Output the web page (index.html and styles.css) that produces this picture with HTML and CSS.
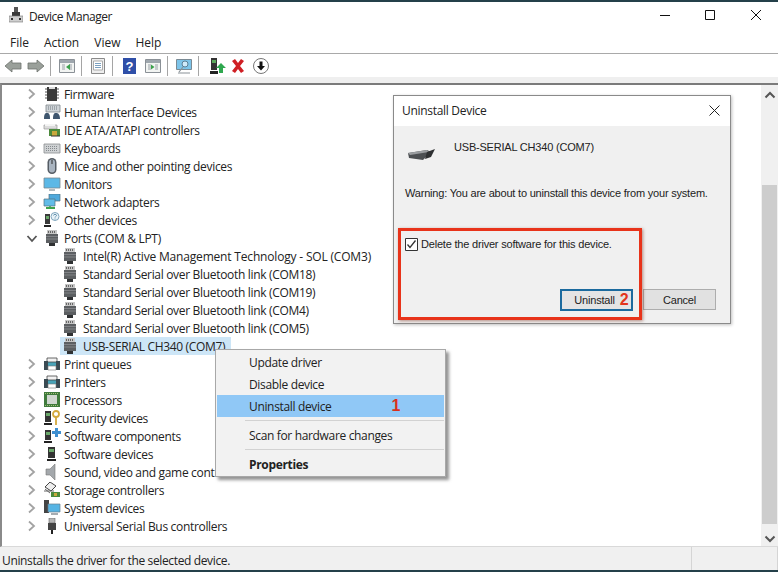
FILE: index.html
```html
<!DOCTYPE html>
<html lang="en">
<head>
<meta charset="utf-8">
<title>Device Manager</title>
<link rel="stylesheet" href="styles.css">
</head>
<body>
<svg class="defs" aria-hidden="true">
  <symbol id="chev-r" viewBox="0 0 9 12"><path d="M2 1.5 7 6 2 10.500" fill="none" stroke="#a3a3a3" stroke-width="1.8"/></symbol>
  <symbol id="chev-d" viewBox="0 0 12 9"><path d="M1.500 2 6 7 10.500 2" fill="none" stroke="#555" stroke-width="1.800"/></symbol>
  <symbol id="i-chip" viewBox="0 0 16 16"><path d="M3 1h10v14H3z" fill="#3a3a3a"/><path d="M1 3h2M1 6h2M1 9h2M1 12h2M13 3h2M13 6h2M13 9h2M13 12h2" stroke="#555"/><path d="M5 1h6v2H5z" fill="#ddd"/></symbol>
  <symbol id="i-hid" viewBox="0 0 18 16"><path d="M3 1h14v7H3z" fill="#cfd4d8" stroke="#7d858c" stroke-width=".8"/><path d="M5 3h10M5 5h10" stroke="#70787e" stroke-dasharray="1 1"/><path d="M1 15c0-5 1-6 3-6s3 1 3 6zM10 15c0-5 1-6 3-6s4 1 4 6z" fill="#3f566e"/></symbol>
  <symbol id="i-ide" viewBox="0 0 18 16"><path d="M1 3h13v4H1z" fill="#dcdcdc" stroke="#9a9a9a" stroke-width=".7"/><path d="M2 2h10v2H2z" fill="#f4f4f4"/><path d="M6 7h11v7H6z" fill="#4c8a3c"/><path d="M9 9h5v5H9z" fill="#c9a83c"/><path d="M8 14h9" stroke="#333"/></symbol>
  <symbol id="i-kbd" viewBox="0 0 18 16"><path d="M1 4h16v9H1z" fill="#cfd2d4" stroke="#8a8d90" stroke-width=".8"/><path d="M3 6.500h12M3 8.500h12M3 10.500h12" stroke="#858a8e" stroke-dasharray="1 1"/></symbol>
  <symbol id="i-mouse" viewBox="0 0 18 16"><rect x="4.500" y="0" width="9" height="16" rx="4.500" fill="#555c64"/><rect x="6" y="1.500" width="6" height="13" rx="3" fill="#a9b4c0"/><path d="M9 2v4" stroke="#444" stroke-width="1.200"/></symbol>
  <symbol id="i-mon" viewBox="0 0 18 16"><path d="M1 2h16v10H1z" fill="#5cb8e6" stroke="#7a8890" stroke-width=".8"/><path d="M6 14h6" stroke="#9aa4aa" stroke-width="1.500"/></symbol>
  <symbol id="i-net" viewBox="0 0 18 16"><path d="M6 0h11v7H6z" fill="#4fa9dc" stroke="#55707f" stroke-width=".7"/><path d="M1 5h11v7H1z" fill="#62bce8" stroke="#55707f" stroke-width=".7"/><path d="M3 14h9" stroke="#3fa34d" stroke-width="2"/><path d="M7 12v3" stroke="#3fa34d" stroke-width="1.500"/></symbol>
  <symbol id="i-other" viewBox="0 0 18 16"><path d="M2 2h5v10H2z" fill="#3b3b3b"/><path d="M3 4h3v3H3z" fill="#6aa86a"/><path d="M1 13h7v2H1z" fill="#222"/><circle cx="12" cy="4.500" r="4" fill="#e8f2f8" stroke="#7fa6bd"/><path d="M10.500 3.500c0-1.500 3-1.500 3 0 0 1-1.500 1-1.500 2M12 6.500v1" fill="none" stroke="#4a7f9e" stroke-width=".8"/></symbol>
  <symbol id="i-port" viewBox="0 0 16 16"><path d="M3 0h10v4H3z" fill="#c6c6c6"/><path d="M4.500 1v2M6.500 1v2M8.500 1v2M10.500 1v2" stroke="#666"/><path d="M2 4h12v9H2z" fill="#5c5f62"/><path d="M2 6.500h12M2 9h12" stroke="#8a8d90" stroke-width=".8"/><path d="M5 13h6v3H5z" fill="#2f3133"/></symbol>
  <symbol id="i-print" viewBox="0 0 18 16"><path d="M1 5h16v5H1z" fill="#48a3b8"/><path d="M4 2h10v4H4z" fill="#f2f2f2" stroke="#444" stroke-width=".8"/><path d="M1 5h4v9H1zM13 5h4v9h-4z" fill="#3a4a52"/><path d="M5 10h8v4H5z" fill="#fff" stroke="#777" stroke-width=".6"/></symbol>
  <symbol id="i-cpu" viewBox="0 0 18 16"><path d="M1 0h16v15H1z" fill="#3f7a3c"/><path d="M4 3h10v9H4z" fill="#cfd6cf"/><path d="M2 1.500h14M2 13.500h14" stroke="#a5c07a" stroke-dasharray="1 1"/></symbol>
  <symbol id="i-sec" viewBox="0 0 18 16"><path d="M2 1h6v11H2z" fill="#333"/><path d="M3 3h4v3H3z" fill="#6aa86a"/><path d="M1 13h8v2H1z" fill="#222"/><circle cx="13" cy="4" r="3" fill="none" stroke="#d4a93c" stroke-width="1.800"/><path d="M13 7v8" stroke="#d4a93c" stroke-width="1.800"/></symbol>
  <symbol id="i-comp" viewBox="0 0 18 16"><path d="M2 2h6v10H2z" fill="#333"/><path d="M3 4h4v3H3z" fill="#6aa86a"/><path d="M1 13h8v2H1z" fill="#222"/><path d="M12 0h3v3h3v3h-3v3h-3V6H9V3h3z" fill="#3f8fd0"/></symbol>
  <symbol id="i-soft" viewBox="0 0 18 16"><path d="M5 1h7v11H5z" fill="#333"/><path d="M6 3h5v3H6z" fill="#6aa86a"/><path d="M4 13h9v2H4z" fill="#222"/></symbol>
  <symbol id="i-sound" viewBox="0 0 18 16"><path d="M3 5h4l5-5v16l-5-5H3z" fill="#a4a8ac" stroke="#777" stroke-width=".6"/></symbol>
  <symbol id="i-stor" viewBox="0 0 18 16"><path d="M2 5 7 0l6 4-5 5z" fill="#eee" stroke="#444"/><path d="M1 9h10M2 7l5 4" stroke="#666"/><path d="M8 10h9v5H8z" fill="#4c8a3c"/><path d="M11 11h3v3h-3z" fill="#c9a83c"/></symbol>
  <symbol id="i-sys" viewBox="0 0 18 16"><path d="M1 0h5v13H1z" fill="#444"/><path d="M5 4h12v8H5z" fill="#56b4e4" stroke="#67808e" stroke-width=".7"/><path d="M8 14h7" stroke="#8a9298" stroke-width="1.500"/></symbol>
  <symbol id="i-usb" viewBox="0 0 18 16"><path d="M6 0h6v5H6z" fill="#b5b5b5" stroke="#666" stroke-width=".6"/><path d="M5 5h8v7H5z" fill="#444"/><path d="M8 12h2v4H8z" fill="#222"/></symbol>
  <symbol id="t-pane" viewBox="0 0 16 16"><path d="M.500 1.500h15v13H.500z" fill="#f2f4f2" stroke="#8a9096"/><path d="M1 2h14v3H1z" fill="#9ea6ad"/><path d="M3 7h3M3 9h3M3 11h3M10 7h3M10 9h3M10 11h3" stroke="#98a0a6"/></symbol>
</svg>

<div class="window">
  <header class="titlebar">
    <svg class="app-icon" viewBox="0 0 14 16"><path d="M5 0h4v6H5z" fill="#555"/><path d="M3 5h8v4H3z" fill="#3a3a3a"/><path d="M0 9h14v6H0z" fill="#cfcfcf" stroke="#777" stroke-width=".6"/><path d="M2 11h2v2H2zM10 11h2v2h-2z" fill="#333"/></svg>
    <span class="app-title">Device Manager</span>
    <div class="win-btns">
      <svg class="win-btn" viewBox="0 0 10 10"><path d="M0 5.500h10" stroke="#111"/></svg>
      <svg class="win-btn" viewBox="0 0 10 10"><path d="M.500.500h9v9h-9z" fill="none" stroke="#111"/></svg>
      <svg class="win-btn" viewBox="0 0 10 10"><path d="M0 0l10 10M10 0 0 10" stroke="#111"/></svg>
    </div>
  </header>

  <nav class="menubar">
    <span>File</span><span>Action</span><span>View</span><span>Help</span>
  </nav>

  <div class="toolbar">
    <svg class="tool" viewBox="0 0 16 16"><path d="M0 8 7 2v3h9v6H7v3z" fill="#9aa09a" stroke="#6c716c" stroke-width=".8"/></svg>
    <svg class="tool gap7" viewBox="0 0 16 16"><path d="M16 8 9 2v3H0v6h9v3z" fill="#9aa09a" stroke="#6c716c" stroke-width=".8"/></svg>
    <i class="tsep"></i>
    <svg class="tool" viewBox="0 0 16 16"><use href="#t-pane"/><path d="M11 6v6L7 9z" fill="#3aa04a"/></svg>
    <i class="tsep"></i>
    <svg class="tool" viewBox="0 0 16 16"><path d="M1.500.500h13v15h-13z" fill="#eee" stroke="#8a8a8a"/><path d="M3.500 3h9v9h-9z" fill="#fff" stroke="#aaa"/><path d="M5 5.500h6M5 7.500h6M5 9.500h6" stroke="#7aa0c0"/></svg>
    <i class="tsep"></i>
    <svg class="tool" viewBox="0 0 16 16"><path d="M2 0h13v16H2z" fill="#2f4fa8"/><text class="help-q" x="8.500" y="13">?</text></svg>
    <svg class="tool gap8" viewBox="0 0 16 16"><use href="#t-pane"/><path d="M6 6.500v5l3.500-2.500z" fill="#3aa04a"/></svg>
    <i class="tsep"></i>
    <svg class="tool" viewBox="0 0 16 16"><path d="M.500 1.500h15v10H.500z" fill="#7cc4ea" stroke="#7a8a94"/><circle cx="9" cy="6" r="3" fill="#cfeafa" stroke="#5a7f96"/><path d="M7 9 3 14M2 15h12" stroke="#8a9298" stroke-width="1.200"/></svg>
    <i class="tsep"></i>
    <svg class="tool add" viewBox="0 0 16 16"><path d="M1 0h6v12H1z" fill="#333"/><path d="M2 2h4v3H2z" fill="#5aa85a"/><path d="M0 13h8v3H0z" fill="#222"/><path d="M11 5l5 5h-3v5H9v-5H6z" fill="#2fa84f"/></svg>
    <svg class="tool gap4" viewBox="0 0 16 16"><path d="M2 3 5 1l3 4 3-4 3 2-4 5 4 5-3 2-3-4-3 4-3-2 4-5z" fill="#cf1f24"/></svg>
    <svg class="tool gap7" viewBox="0 0 16 16"><circle cx="8" cy="8" r="7.500" fill="#fff" stroke="#777"/><path d="M6.500 3.500h3v4.500h2.500L8 12.500 4 8h2.500z" fill="#111"/></svg>
  </div>

  <main class="main">
    <div class="tree">
      <div class="row"><svg class="chev"><use href="#chev-r"/></svg><svg class="ico"><use href="#i-chip"/></svg><span>Firmware</span></div>
      <div class="row"><svg class="chev"><use href="#chev-r"/></svg><svg class="ico"><use href="#i-hid"/></svg><span>Human Interface Devices</span></div>
      <div class="row"><svg class="chev"><use href="#chev-r"/></svg><svg class="ico"><use href="#i-ide"/></svg><span>IDE ATA/ATAPI controllers</span></div>
      <div class="row"><svg class="chev"><use href="#chev-r"/></svg><svg class="ico"><use href="#i-kbd"/></svg><span>Keyboards</span></div>
      <div class="row"><svg class="chev"><use href="#chev-r"/></svg><svg class="ico"><use href="#i-mouse"/></svg><span>Mice and other pointing devices</span></div>
      <div class="row"><svg class="chev"><use href="#chev-r"/></svg><svg class="ico"><use href="#i-mon"/></svg><span>Monitors</span></div>
      <div class="row"><svg class="chev"><use href="#chev-r"/></svg><svg class="ico"><use href="#i-net"/></svg><span>Network adapters</span></div>
      <div class="row"><svg class="chev"><use href="#chev-r"/></svg><svg class="ico"><use href="#i-other"/></svg><span>Other devices</span></div>
      <div class="row"><svg class="chev chev-open"><use href="#chev-d"/></svg><svg class="ico"><use href="#i-port"/></svg><span>Ports (COM &amp; LPT)</span></div>
      <div class="row child wide"><svg class="ico-c"><use href="#i-port"/></svg><span>Intel(R) Active Management Technology - SOL (COM3)</span></div>
      <div class="row child"><svg class="ico-c"><use href="#i-port"/></svg><span>Standard Serial over Bluetooth link (COM18)</span></div>
      <div class="row child"><svg class="ico-c"><use href="#i-port"/></svg><span>Standard Serial over Bluetooth link (COM19)</span></div>
      <div class="row child"><svg class="ico-c"><use href="#i-port"/></svg><span>Standard Serial over Bluetooth link (COM4)</span></div>
      <div class="row child"><svg class="ico-c"><use href="#i-port"/></svg><span>Standard Serial over Bluetooth link (COM5)</span></div>
      <div class="row child"><div class="selected"><svg class="ico-c"><use href="#i-port"/></svg><span>USB-SERIAL CH340 (COM7)</span></div></div>
      <div class="row"><svg class="chev"><use href="#chev-r"/></svg><svg class="ico"><use href="#i-print"/></svg><span>Print queues</span></div>
      <div class="row"><svg class="chev"><use href="#chev-r"/></svg><svg class="ico"><use href="#i-print"/></svg><span>Printers</span></div>
      <div class="row"><svg class="chev"><use href="#chev-r"/></svg><svg class="ico"><use href="#i-cpu"/></svg><span>Processors</span></div>
      <div class="row"><svg class="chev"><use href="#chev-r"/></svg><svg class="ico"><use href="#i-sec"/></svg><span>Security devices</span></div>
      <div class="row"><svg class="chev"><use href="#chev-r"/></svg><svg class="ico"><use href="#i-comp"/></svg><span>Software components</span></div>
      <div class="row"><svg class="chev"><use href="#chev-r"/></svg><svg class="ico"><use href="#i-soft"/></svg><span>Software devices</span></div>
      <div class="row"><svg class="chev"><use href="#chev-r"/></svg><svg class="ico"><use href="#i-sound"/></svg><span>Sound, video and game controllers</span></div>
      <div class="row"><svg class="chev"><use href="#chev-r"/></svg><svg class="ico"><use href="#i-stor"/></svg><span>Storage controllers</span></div>
      <div class="row"><svg class="chev"><use href="#chev-r"/></svg><svg class="ico"><use href="#i-sys"/></svg><span>System devices</span></div>
      <div class="row"><svg class="chev"><use href="#chev-r"/></svg><svg class="ico"><use href="#i-usb"/></svg><span>Universal Serial Bus controllers</span></div>
    </div>

    <div class="scrollbar">
      <svg class="sb-arrow" viewBox="0 0 12 8"><path d="M1.500 6.500 6 2l4.500 4.500" fill="none" stroke="#555" stroke-width="2"/></svg>
      <div class="sb-track"><div class="sb-thumb"></div></div>
      <svg class="sb-arrow" viewBox="0 0 12 8"><path d="M1.500 1.500 6 6l4.500-4.500" fill="none" stroke="#555" stroke-width="2"/></svg>
    </div>

    <div class="context-menu">
      <div class="cm-item">Update driver</div>
      <div class="cm-item">Disable device</div>
      <div class="cm-item cm-active"><span>Uninstall device</span><b class="num num-1">1</b></div>
      <div class="cm-sep"></div>
      <div class="cm-item">Scan for hardware changes</div>
      <div class="cm-sep"></div>
      <div class="cm-item cm-bold">Properties</div>
    </div>

    <section class="dialog">
      <div class="dlg-title">
        <span>Uninstall Device</span>
        <svg class="dlg-x" viewBox="0 0 11 11"><path d="M.500.500l10 10M10.500.500l-10 10" stroke="#222"/></svg>
      </div>
      <div class="dlg-body">
        <div class="dlg-device">
          <svg class="dlg-icon" viewBox="0 0 29 14"><path d="M1 6 20 3l4 2-8 8-14-2z" fill="#4c4f52"/><path d="M1 6 20 3l2 2L3 8z" fill="#9a9da0"/><path d="M20 5l8-3-4 8-6 2z" fill="#2e3032"/></svg>
          <span>USB-SERIAL CH340 (COM7)</span>
        </div>
        <p class="dlg-warn">Warning: You are about to uninstall this device from your system.</p>
        <label class="dlg-check">
          <svg class="check" viewBox="0 0 13 13"><path d="M.500.500h12v12H.500z" fill="#fff" stroke="#333"/><path d="M2.500 6.500 5 9.500l5.500-7" fill="none" stroke="#333" stroke-width="1.300"/></svg>
          <span>Delete the driver software for this device.</span>
        </label>
        <div class="dlg-btns">
          <div class="btn btn-primary"><span>Uninstall</span><b class="num num-2">2</b></div>
          <div class="btn">Cancel</div>
        </div>
      </div>
      <div class="red-box"></div>
    </section>
  </main>

  <footer class="status">
    <span class="status-text">Uninstalls the driver for the selected device.</span>
    <i class="status-cell"></i>
    <i class="status-cell last"></i>
  </footer>
</div>
</body>
</html>
```

FILE: styles.css
```css
* { box-sizing: border-box; }
html, body { margin: 0; padding: 0; height: 100%; overflow: hidden; background: #fff; }
body { font-family: "Open Sans", "Noto Sans", sans-serif; font-size: 12px; color: #222; }
.defs { position: absolute; width: 0; height: 0; }
.help-q { font: bold 13px "Liberation Sans", sans-serif; fill: #fff; text-anchor: middle; }

.window { width: 778px; height: 572px; display: flex; flex-direction: column; border-top: 2px solid #24404a; border-bottom: 2px solid #24404a; }

.titlebar { height: 29px; flex: none; display: flex; align-items: center; padding: 0 0 3px 9px; }
.app-icon { width: 14px; height: 16px; }
.app-title { margin: 3px 0 0 6px; font-size: 12px; letter-spacing: -.04em; }
.win-btns { margin-left: auto; display: flex; padding-right: 17px; gap: 35px; }
.win-btn { width: 10px; height: 10px; display: block; }
.win-btn:last-child { margin-left: 1px; }

.menubar { height: 23px; flex: none; display: flex; align-items: center; padding-left: 10px; gap: 15px; border-bottom: 1px solid #a9a9a9; }

.toolbar { height: 29px; flex: none; display: flex; align-items: center; padding-left: 5px; border-bottom: 6px solid #efefef; }
.tool { width: 16px; height: 16px; flex: none; display: block; overflow: visible; }
.gap7 { margin-left: 7px; }
.gap8 { margin-left: 8px; }
.gap4 { margin-left: 4px; }
.add { margin-left: 3px; }
.tsep { width: 1px; height: 20px; background: #a5a5a5; margin: 0 8px 0 6px; flex: none; }

.main { flex: 1; min-height: 0; display: flex; position: relative; border-top: 2px solid #7b7b7b; border-left: 2px solid #8a8a8a; border-bottom: 1px solid #d9d9d9; }
.tree { flex: 1; overflow: hidden; }
.row { height: 18px; display: flex; align-items: center; padding-left: 25px; white-space: nowrap; letter-spacing: -.32px; }
.wide { letter-spacing: -.18px; }
.chev { width: 9px; height: 12px; flex: none; }
.chev-open { width: 12px; height: 9px; margin: 0 -2px 0 -1px; }
.ico { width: 18px; height: 16px; flex: none; margin: 0 3px 0 7px; }
.child { padding-left: 58px; }
.selected { display: flex; align-items: center; height: 18px; background: #cde6f7; padding: 0 6px 0 2px; }
.ico-c { width: 16px; height: 16px; flex: none; margin-right: 5px; }
.child > .ico-c { margin-left: 2px; }

.scrollbar { width: 17px; flex: none; display: flex; flex-direction: column; align-items: center; background: #f0f0f0; padding: 0 1px; }
.sb-arrow { width: 12px; height: 8px; flex: none; margin: 6px 0 3px; }
.sb-track { flex: 1; width: 15px; padding: 83px 0 5px; display: flex; }
.sb-thumb { flex: 1; background: #cdcdcd; }

.context-menu { position: absolute; left: 213px; top: 264px; width: 231px; height: 128px; padding: 1px; background: #f2f2f2; border: 1px solid #a8a8a8; box-shadow: 3px 3px 3px rgba(60,60,60,.55); letter-spacing: -.34px; }
.cm-item { height: 22px; display: flex; align-items: center; padding-left: 32px; }
.cm-active { background: #90c8f6; }
.cm-bold { font-weight: 700; }
.cm-sep { height: 7px; margin-left: 28px; padding-top: 3px; }
.cm-sep::after { content: ""; display: block; height: 1px; background: #d2d2d2; }
.num { font-family: "Liberation Sans", sans-serif; font-weight: 700; color: #d9301c; }
.num-1 { font-size: 16px; margin-left: 60px; }
.num-2 { font-size: 16px; margin-left: 5px; color: #e2351c; letter-spacing: 0; }

.dialog { position: absolute; left: 391px; top: 10px; width: 338px; height: 229px; border: 1px solid #8a8a8a; background: #f0f0f0; display: flex; flex-direction: column; box-shadow: 1px 1px 3px rgba(0,0,0,.25); font-family: "Liberation Sans", sans-serif; font-size: 11px; letter-spacing: -.2px; }
.dlg-title { height: 30px; flex: none; background: #fff; display: flex; align-items: center; justify-content: space-between; padding: 0 10px 2px 8px; font-family: "Open Sans", sans-serif; font-size: 12px; letter-spacing: -.3px; }
.dlg-x { width: 11px; height: 11px; display: block; }
.dlg-body { flex: 1; display: flex; flex-direction: column; padding: 0 14px 12px 11px; }
.dlg-device { display: flex; align-items: flex-start; padding: 15px 0 0 2px; height: 44px; }
.dlg-icon { width: 29px; height: 14px; margin: 6px 18px 0 0; }
.dlg-warn { margin: 16px 0 0; line-height: 14px; white-space: nowrap; }
.dlg-check { display: flex; align-items: center; margin-top: 37px; gap: 3px; line-height: 14px; }
.check { width: 13px; height: 13px; flex: none; }
.dlg-btns { margin-top: auto; display: flex; justify-content: flex-end; align-items: flex-start; gap: 10px; }
.btn { width: 73px; height: 21px; background: #e1e1e1; border: 1px solid #adadad; display: flex; align-items: center; justify-content: center; }
.btn-primary { height: 22px; border: 2px solid #1b6a9e; background: #e4e4e4; padding-left: 10px; }
.red-box { position: absolute; left: 4px; top: 132px; width: 244px; height: 92px; border: 3px solid #e8331a; box-shadow: 1px 1px 3px rgba(120,40,20,.5); pointer-events: none; }

.status { height: 23px; flex: none; background: #f0f0f0; display: flex; align-items: center; padding: 3px 0 0 2px; }
.status-text { flex: 1; letter-spacing: -.36px; }
.status-cell { width: 86px; align-self: stretch; margin-top: -3px; border-left: 1px solid #d5d5d5; flex: none; }
.status-cell.last { width: 1px; }
```
